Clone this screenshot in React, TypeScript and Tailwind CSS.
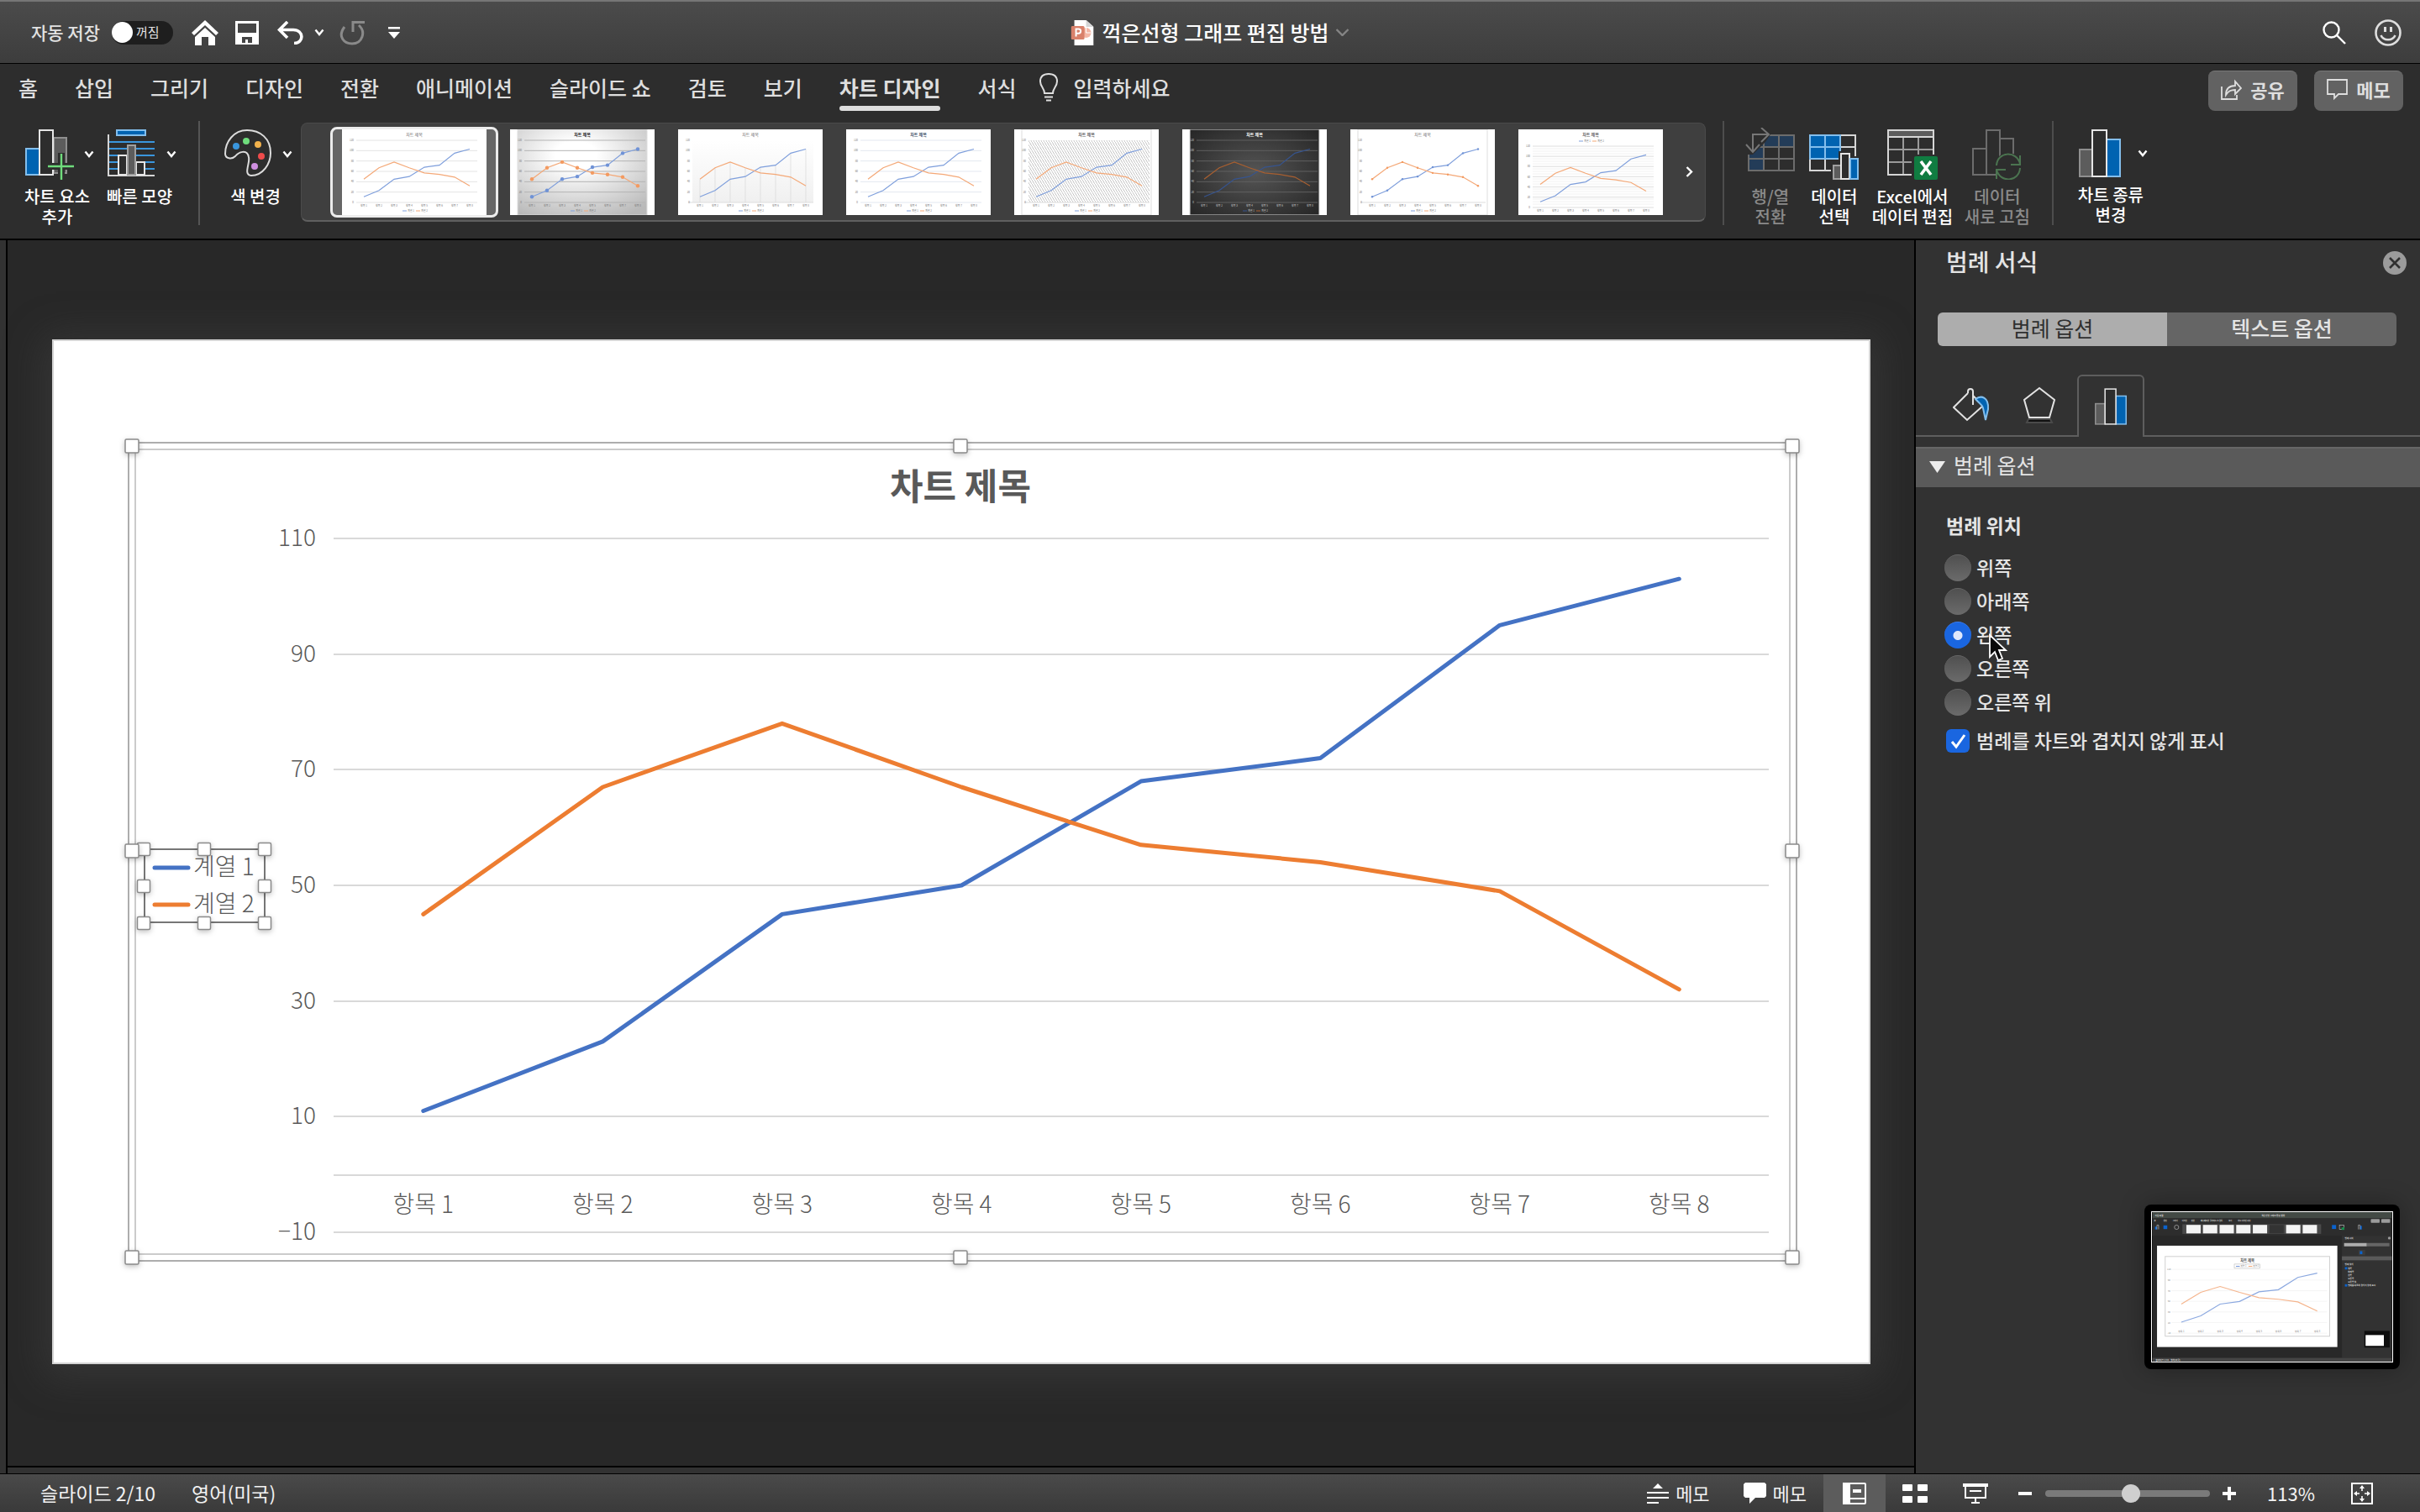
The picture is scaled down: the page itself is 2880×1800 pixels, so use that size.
import type { ReactNode } from "react";

const seriesOne = [11, 23, 45, 50, 68, 72, 95, 103];
const seriesTwo = [45, 67, 78, 67, 57, 54, 49, 32];

const tabs = [
  "홈",
  "삽입",
  "그리기",
  "디자인",
  "전환",
  "애니메이션",
  "슬라이드 쇼",
  "검토",
  "보기",
  "차트 디자인",
  "서식",
];

const legendPositions = ["위쪽", "아래쪽", "왼쪽", "오른쪽", "오른쪽 위"];

type Point = [number, number];

function plot(
  values: number[],
  left: number,
  right: number,
  top: number,
  bottom: number,
  min: number,
  max: number,
): Point[] {
  const step = (right - left) / values.length;
  return values.map((v, i) => [
    left + step * (i + 0.5),
    bottom - ((v - min) / (max - min)) * (bottom - top),
  ]);
}

function toPoints(points: Point[]) {
  return points.map(([x, y]) => `${x.toFixed(1)},${y.toFixed(1)}`).join(" ");
}

/* ---------- icons ---------- */

function Chevron({ className = "" }: { className?: string }) {
  return (
    <svg width="12" height="9" viewBox="0 0 12 9" className={className}>
      <path d="M1.5 1.5 6 7l4.5-5.5" fill="none" stroke="currentColor" strokeWidth="2.4" />
    </svg>
  );
}

function AddElementIcon() {
  return (
    <svg width="58" height="62" viewBox="0 0 58 62" fill="none" strokeWidth="2">
      <rect x="1" y="25" width="16" height="31" fill="#0063b1" stroke="#83beec" />
      <path d="M34 12h15v42H34z" fill="#5c5c5c" stroke="#8f8f8f" />
      <rect x="17" y="3" width="16" height="53" fill="#2d2d2d" stroke="#e6e6e6" />
      <path d="M43 30v31M27 46h31" stroke="#2d2d2d" strokeWidth="8" />
      <path d="M43 31v31M27 46h31" stroke="#6fdc7c" strokeWidth="2.4" />
    </svg>
  );
}

function QuickLayoutIcon() {
  return (
    <svg width="58" height="62" viewBox="0 0 58 62" fill="none" strokeWidth="2">
      <rect x="11" y="3" width="34" height="6" fill="#0063b1" stroke="#83beec" />
      <path d="M2 17h54M2 25h54M2 33h54M2 41h54M2 49h54" stroke="#3a96dd" />
      <path d="M1 8v49h55" stroke="#d6d6d6" />
      <rect x="13" y="33" width="10" height="23" fill="#2d2d2d" stroke="#e6e6e6" />
      <rect x="34" y="41" width="10" height="15" fill="#2d2d2d" stroke="#e6e6e6" />
      <rect x="24" y="21" width="9" height="35" fill="#5c5c5c" stroke="#a0a0a0" />
    </svg>
  );
}

function PaletteIcon() {
  return (
    <svg width="58" height="62" viewBox="0 0 58 62" fill="none">
      <path
        d="M28 3C12 3 2 17 2 31c0 6 8 7 12 3 4-5 14-9 16 1 2 7-7 21 3 22C47 57 56 43 56 30 56 13 44 3 28 3Z"
        stroke="#dcdcdc"
        strokeWidth="2"
      />
      <circle cx="15" cy="22" r="4" fill="#3a96dd" />
      <circle cx="27" cy="16" r="4" fill="#6fdc7c" />
      <circle cx="41" cy="20" r="4" fill="#f2b14c" />
      <circle cx="45" cy="34" r="4" fill="#ee4b4b" />
      <circle cx="37" cy="46" r="4" fill="#cf8fe0" />
    </svg>
  );
}

function SwapRowsIcon() {
  return (
    <svg width="60" height="62" viewBox="0 0 60 62" fill="none" strokeWidth="2">
      <path d="M4 9h54v14H22v28H4z" fill="#233c58" />
      <path d="M4 9h54v42H4zM22 9v42M40 9v42M4 23h54M4 37h54" stroke="#6c6c6c" />
      <path d="M0 0h24l6 8-6 9L9 32H0z" fill="#2d2d2d" />
      <path d="M9 28V8h18M19 0l9 8-9 9M1 20l8 9 8-9" stroke="#777777" />
    </svg>
  );
}

function SelectDataIcon() {
  return (
    <svg width="60" height="62" viewBox="0 0 60 62" fill="none" strokeWidth="2">
      <path d="M1 9h54v42H1zM19 9v42M37 9v42M1 23h54M1 37h54" stroke="#d6d6d6" />
      <path d="M1 9h36v28H1z" fill="#0063b1" stroke="#83beec" />
      <path d="M19 9v28M1 23h36" stroke="#83beec" />
      <path d="M26 42h9V28h14v6h11v28H26z" fill="#2d2d2d" />
      <rect x="29" y="45" width="9" height="16" fill="#5c5c5c" stroke="#a0a0a0" />
      <rect x="38" y="31" width="10" height="30" fill="#2d2d2d" stroke="#e6e6e6" />
      <rect x="49" y="37" width="9" height="24" fill="#0063b1" stroke="#83beec" />
    </svg>
  );
}

function ExcelIcon() {
  return (
    <svg width="60" height="62" viewBox="0 0 60 62" fill="none" strokeWidth="2">
      <path d="M19 11v45M37 11v45M1 26h54M1 41h54" stroke="#9a9a9a" />
      <rect x="1" y="3" width="54" height="53" stroke="#d6d6d6" />
      <rect x="1" y="3" width="54" height="8" fill="#5c5c5c" stroke="#d6d6d6" />
      <rect x="29" y="32" width="31" height="30" fill="#2d2d2d" />
      <rect x="32" y="34" width="28" height="28" rx="2" fill="#107c41" />
      <path d="m40 40 12 16M52 40 40 56" stroke="#ffffff" strokeWidth="3.6" />
    </svg>
  );
}

function RefreshDataIcon() {
  return (
    <svg width="60" height="62" viewBox="0 0 60 62" fill="none" strokeWidth="2">
      <rect x="1" y="25" width="16" height="31" stroke="#6c6c6c" />
      <rect x="33" y="13" width="16" height="43" stroke="#6c6c6c" />
      <rect x="17" y="3" width="16" height="53" fill="#2d2d2d" stroke="#6c6c6c" />
      <circle cx="43" cy="47" r="17" fill="#2d2d2d" />
      <path d="M29 45c1-17 24-18 28-2M57 33v11H46M57 48c-1 17-24 18-28 2M29 61V50h11" stroke="#4b7450" />
    </svg>
  );
}

function BarsIcon({ width, height }: { width: number; height: number }) {
  return (
    <svg width={width} height={height} viewBox="0 0 50 57" fill="none" strokeWidth="2">
      <rect x="1" y="24" width="15" height="32" fill="#5c5c5c" stroke="#8f8f8f" />
      <rect x="33" y="12" width="16" height="44" fill="#0063b1" stroke="#83beec" />
      <rect x="16" y="1" width="17" height="55" fill="#2d2d2d" stroke="#e6e6e6" />
    </svg>
  );
}

/* ---------- gallery ---------- */

type ThumbStyle = {
  name: string;
  background?: string;
  title?: string;
  bold?: boolean;
  text?: string;
  grid?: string;
  inset?: boolean;
  markers?: boolean;
  drops?: boolean;
  hatch?: boolean;
  fine?: boolean;
  legendTop?: boolean;
  dim?: boolean;
};

const thumbs: ThumbStyle[] = [
  { name: "스타일 1", grid: "#e4e4e4" },
  { name: "스타일 2", background: "url(#silver)", title: "#222222", bold: true, grid: "#b4b4b4", inset: true, markers: true },
  { name: "스타일 3", drops: true },
  { name: "스타일 4", title: "#44546a", bold: true, grid: "#e3e8f0" },
  { name: "스타일 5", hatch: true, inset: true, bold: true },
  { name: "스타일 6", background: "url(#night)", title: "#ffffff", text: "#c8c8c8", bold: true, grid: "#606060", inset: true, dim: true },
  { name: "스타일 7", inset: true, markers: true },
  { name: "스타일 8", grid: "#dddddd", fine: true, legendTop: true, bold: true },
];

function ChartThumb({ style }: { style: ThumbStyle }) {
  const left = 17;
  const right = 161;
  const top = style.legendTop ? 20 : 13;
  const bottom = style.legendTop ? 93 : 87;
  const one = plot(seriesOne, left, right, top, bottom, 0, 120);
  const two = plot(seriesTwo, left, right, top, bottom, 0, 120);
  const blue = style.dim ? "#36548f" : "#7f9fdc";
  const orange = style.dim ? "#a85f30" : "#f4a877";
  const text = style.text ?? "#777777";
  const rows = [0, 1, 2, 3, 4, 5, 6].map((i) => top + ((bottom - top) / 6) * i);
  const legendY = style.legendTop ? 15 : 98;
  const markerSize = style.background ? 2.2 : 1.2;

  return (
    <svg width="172" height="102" viewBox="0 0 172 102" className="bg-white">
      <defs>
        <radialGradient id="silver" cx="0.45" cy="0.3" r="0.8">
          <stop offset="0.2" stopColor="#ffffff" />
          <stop offset="1" stopColor="#b9b9b9" />
        </radialGradient>
        <radialGradient id="night" cx="0.5" cy="0.5" r="0.7">
          <stop offset="0" stopColor="#555555" />
          <stop offset="1" stopColor="#262626" />
        </radialGradient>
        <linearGradient id="fade" x1="0" y1="0" x2="0" y2="1">
          <stop offset="0" stopColor="#ffffff" />
          <stop offset="1" stopColor="#f0f0f0" />
        </linearGradient>
        <pattern id="hatch" width="3" height="5" patternUnits="userSpaceOnUse">
          <path d="M0 0 3 5" stroke="#b4b4b4" strokeWidth="0.8" />
        </pattern>
      </defs>
      {style.inset && (
        <rect x="9" y="0" width="154" height="102" fill={style.background ?? "#ffffff"} stroke="#dddddd" strokeWidth="1" />
      )}
      {style.drops && <rect x={left} y={top} width={right - left} height={bottom - top} fill="url(#fade)" />}
      {style.hatch && <rect x={left} y={top} width={right - left} height={bottom - top} fill="url(#hatch)" />}
      {style.grid &&
        rows.map((y) => <path key={y} d={`M${left} ${y}H${right}`} stroke={style.grid} strokeWidth="1" />)}
      {style.fine &&
        Array.from({ length: 24 }, (_, i) => (
          <path key={i} d={`M${left} ${top + i * 3}H${right}`} stroke="#efefef" strokeWidth="0.8" />
        ))}
      {!style.grid && <path d={`M${left - 5} ${bottom}H${right}`} stroke="#dddddd" strokeWidth="1" />}
      {style.drops &&
        one.map(([x, y], i) => (
          <path key={x} d={`M${x} ${Math.min(y, two[i][1])}V${bottom}`} stroke="#d9d9d9" strokeWidth="0.7" />
        ))}
      <polyline points={toPoints(one)} fill="none" stroke={blue} strokeWidth="1.2" />
      <polyline points={toPoints(two)} fill="none" stroke={orange} strokeWidth="1.2" />
      {style.markers && one.map(([x, y]) => <circle key={x} cx={x} cy={y} r={markerSize} fill="#6f92d6" />)}
      {style.markers && two.map(([x, y]) => <circle key={x} cx={x} cy={y} r={markerSize} fill="#f39a60" />)}
      <text
        x="86"
        y="8"
        textAnchor="middle"
        fontSize="5"
        fontWeight={style.bold ? 700 : 400}
        fill={style.title ?? "#666666"}
      >
        차트 제목
      </text>
      {rows.map((y, i) => (
        <text key={y} x={left - 3} y={y + 1} textAnchor="end" fontSize="3" fill={text}>
          {120 - i * 20}
        </text>
      ))}
      {one.map(([x], i) => (
        <text key={x} x={x} y={bottom + 5} textAnchor="middle" fontSize="3" fill={text}>
          항목 {i + 1}
        </text>
      ))}
      <path d={`M72 ${legendY - 1}h5`} stroke={blue} strokeWidth="1" />
      <text x="78" y={legendY} fontSize="3" fill={text}>
        계열 1
      </text>
      <path d={`M88 ${legendY - 1}h5`} stroke={orange} strokeWidth="1" />
      <text x="94" y={legendY} fontSize="3" fill={text}>
        계열 2
      </text>
    </svg>
  );
}

/* ---------- slide ---------- */

function Handle({ x, y, size = 16 }: { x: number; y: number; size?: number }) {
  return (
    <rect
      x={x - size / 2}
      y={y - size / 2}
      width={size}
      height={size}
      rx="1.5"
      fill="#ffffff"
      stroke="#8a8a8a"
      strokeWidth="1.5"
      className="drop-shadow-[0_2px_3px_rgba(0,0,0,0.25)]"
    />
  );
}

function SlideChart() {
  const left = 335;
  const right = 2043;
  const top = 237;
  const bottom = 1063;
  const one = plot(seriesOne, left, right, top, bottom, -10, 110);
  const two = plot(seriesTwo, left, right, top, bottom, -10, 110);
  const ticks = [110, 90, 70, 50, 30, 10, -10];

  return (
    <svg
      viewBox="0 0 2164 1220"
      className="block w-full bg-white shadow-[0_6px_44px_10px_rgba(70,70,70,0.45)]"
      fontSize="28"
      fontWeight="300"
      fill="#595959"
    >
      <rect x="1" y="1" width="2162" height="1218" fill="#ffffff" stroke="#d4d4d4" strokeWidth="2" />
      <rect x="91" y="123" width="1985" height="974" fill="none" stroke="#adadad" strokeWidth="2" />
      <rect x="99" y="131" width="1969" height="958" fill="none" stroke="#cbcbcb" strokeWidth="2" />

      <text x="1081" y="191" textAnchor="middle" fontSize="43" fontWeight="700">
        차트 제목
      </text>

      {ticks.map((tick, i) => {
        const y = Math.round(top + ((bottom - top) / 6) * i);
        return (
          <g key={tick}>
            <path d={`M${left} ${y}H${right}`} stroke="#d9d9d9" strokeWidth="2" />
            <text x="314" y={y + 9} textAnchor="end">
              {tick < 0 ? `−${-tick}` : tick}
            </text>
          </g>
        );
      })}
      <path d={`M${left} 995H${right}`} stroke="#d9d9d9" strokeWidth="2" />
      {one.map(([x], i) => (
        <text key={x} x={x} y="1040" textAnchor="middle">
          항목 {i + 1}
        </text>
      ))}

      <g fill="none" strokeWidth="5" strokeLinecap="round" strokeLinejoin="round">
        <polyline points={toPoints(one)} stroke="#4472c4" />
        <polyline points={toPoints(two)} stroke="#ed7d31" />
        <path d="M122 629h40" stroke="#4472c4" />
        <path d="M122 673h40" stroke="#ed7d31" />
      </g>

      {/* selected legend */}
      <text x="168" y="638">
        계열 1
      </text>
      <text x="168" y="682">
        계열 2
      </text>
      <rect x="110" y="607" width="143" height="87" fill="none" stroke="#767676" strokeWidth="2" />
      {[607, 651, 695].map((y) =>
        [109, 181, 253].map((x) =>
          x === 181 && y === 651 ? null : <Handle key={`${x}-${y}`} x={x} y={y} size={15} />,
        ),
      )}

      {[127, 609, 1093].map((y) =>
        [95, 1081, 2071].map((x) =>
          x === 1081 && y === 609 ? null : <Handle key={`${x}-${y}`} x={x} y={y} />,
        ),
      )}
    </svg>
  );
}

/* ---------- floating preview of the window ---------- */

function WindowPreview() {
  const one = plot(seriesOne, 230, 2100, 690, 1460, -10, 110);
  const two = plot(seriesTwo, 230, 2100, 690, 1460, -10, 110);

  return (
    <svg width="288" height="180" viewBox="0 0 2880 1800" className="block border border-white">
      <rect width="2880" height="1800" fill="#282828" />
      <rect width="2880" height="75" fill="#434a45" />
      <rect y="75" width="2880" height="210" fill="#2d2d2d" />
      <rect x="2280" y="285" width="600" height="1470" fill="#323232" />
      <rect y="1755" width="2880" height="45" fill="#444444" />
      <g fill="#d8d8d8" fontSize="26" fontWeight="700">
        <text x="30" y="48">자동 저장</text>
        <text x="1313" y="48">꺽은선형 그래프 편집 방법</text>
        {tabs.map((tab, i) => (
          <text key={tab} x={20 + i * 112} y="116" fontSize="22">
            {tab}
          </text>
        ))}
        <text x="2316" y="322">범례 서식</text>
        <text x="2316" y="636">범례 위치</text>
        {legendPositions.map((label, i) => (
          <text key={label} x="2352" y={686 + i * 40}>
            {label}
          </text>
        ))}
        <text x="2352" y="892">범례를 차트와 겹치지 않게 표시</text>
        <text x="40" y="1788">슬라이드 2/10</text>
        <text x="220" y="1788">영어(미국)</text>
      </g>
      <g fill="#9b9b9b">
        <circle cx="2850" cy="313" r="16" />
        <rect x="2628" y="84" width="106" height="46" rx="8" />
        <rect x="2754" y="84" width="106" height="46" rx="8" />
        <rect x="2306" y="372" width="274" height="40" fill="#adadad" />
        <rect x="2580" y="372" width="272" height="40" fill="#666666" />
        <rect x="2280" y="532" width="600" height="48" fill="#5a5a5a" />
        <rect x="2480" y="455" width="80" height="64" fill="#3d3d3d" />
      </g>
      <g fill="#0b63ce">
        <rect x="2316" y="662" width="28" height="28" />
        <rect x="2316" y="868" width="28" height="28" />
        <rect x="2496" y="470" width="30" height="36" />
        <rect x="30" y="175" width="24" height="34" />
        <rect x="132" y="160" width="46" height="44" />
        <rect x="2160" y="155" width="50" height="48" />
        <rect x="2500" y="165" width="20" height="44" />
      </g>
      <g fill="none" stroke="#cccccc" strokeWidth="6">
        <path d="M54 208v-52h20v52M2498 208v-52h-20v52" />
        <rect x="2250" y="155" width="56" height="52" />
        <circle cx="290" cy="182" r="26" />
      </g>
      <rect x="2276" y="184" width="34" height="30" fill="#17904b" />
      <rect x="360" y="146" width="1670" height="116" fill="#4a4a4a" />
      {thumbs.map((thumb, i) => (
        <rect key={thumb.name} x={408 + i * 200} y="154" width="172" height="102" fill={thumb.dim ? "#333333" : "#f4f4f4"} />
      ))}
      <rect x="55" y="404" width="2170" height="1220" fill="#ffffff" />
      <rect x="153" y="534" width="1980" height="960" fill="none" stroke="#d0d0d0" strokeWidth="10" />
      <g fill="#888888" fontSize="28" textAnchor="middle">
        <text x="1143" y="592" fontSize="44" fontWeight="700" fill="#555555">
          차트 제목
        </text>
        {[110, 90, 70, 50, 30, 10, -10].map((tick, i) => (
          <g key={tick}>
            <text x="200" y={700 + i * 128}>
              {tick}
            </text>
            <path d={`M230 ${690 + i * 128}H2100`} stroke="#ebebeb" strokeWidth="5" />
          </g>
        ))}
        {one.map(([x], i) => (
          <text key={x} x={x} y="1442">
            항목 {i + 1}
          </text>
        ))}
        <text x="1095" y="662">계열 1</text>
        <text x="1245" y="662">계열 2</text>
      </g>
      <rect x="985" y="626" width="310" height="50" fill="none" stroke="#aaaaaa" strokeWidth="5" />
      <path d="M1005 652h46" stroke="#6f93d8" strokeWidth="10" />
      <path d="M1155 652h46" stroke="#f2a472" strokeWidth="10" />
      <polyline points={toPoints(one)} fill="none" stroke="#8ba8e0" strokeWidth="12" />
      <polyline points={toPoints(two)} fill="none" stroke="#f5b48c" strokeWidth="12" />
      <rect x="2550" y="1430" width="305" height="200" fill="#0d0d0d" />
      <rect x="2565" y="1480" width="220" height="130" fill="#ffffff" />
    </svg>
  );
}

/* ---------- ribbon ---------- */

type RibbonButtonProps = {
  icon: ReactNode;
  lines: string[];
  className?: string;
  menu?: boolean;
  disabled?: boolean;
};

function RibbonButton({ icon, lines, className = "w-[92px]", menu, disabled }: RibbonButtonProps) {
  return (
    <button
      type="button"
      disabled={disabled}
      className={`flex shrink-0 flex-col pt-2 ${disabled ? "text-[#8a8a8a]" : "text-white"} ${className}`}
    >
      <span className={`flex h-[62px] w-full items-center ${menu ? "gap-3 pl-2" : "justify-center"}`}>
        {icon}
        {menu && <Chevron />}
      </span>
      <span className="mt-2 w-full text-center text-[20px] leading-6 font-medium whitespace-nowrap">
        {lines.map((line) => (
          <span key={line} className="block">
            {line}
          </span>
        ))}
      </span>
    </button>
  );
}

function TitleBar() {
  return (
    <header className="relative flex h-[76px] items-center border-t-2 border-b border-t-[#767676] border-b-black bg-linear-to-b from-[#4b4b4b] to-[#3d3d3d] pr-[22px] pl-[37px] text-white">
      <span className="text-[21px] font-medium text-[#e2e2e2]">자동 저장</span>
      <button
        type="button"
        role="switch"
        aria-checked="false"
        aria-label="자동 저장"
        className="ml-3.5 flex h-7 w-[73px] items-center rounded-full bg-[#1e1e1e] text-[15px] text-[#e2e2e2]"
      >
        <span className="mr-1 size-[25px] rounded-full bg-white" />
        꺼짐
      </button>

      <button type="button" aria-label="홈" className="ml-[22px]">
        <svg width="32" height="30" viewBox="0 0 32 30" fill="#ffffff">
          <path d="M16 0 0 15l3 3L16 6l13 12 3-3z" />
          <path d="M16 9 4 20v10h8V20h8v10h8V20z" />
        </svg>
      </button>
      <button type="button" aria-label="저장" className="ml-5">
        <svg width="28" height="28" viewBox="0 0 28 28" fill="none" stroke="#ffffff">
          <path d="M1.5 1.5h25v25h-25z" strokeWidth="3" />
          <path d="M2 14h24v13H2z" fill="#ffffff" stroke="none" />
          <path d="M8 19h12v7h-5v-4h-3v4H8z" fill="#444444" stroke="none" />
        </svg>
      </button>
      <button type="button" aria-label="실행 취소" className="ml-[22px]">
        <svg width="32" height="28" viewBox="0 0 32 28" fill="none" stroke="#ffffff" strokeWidth="3.6">
          <path d="M12 1 2.5 10.5 12 20M3 10.5h16c13 0 13 16 1 16" />
        </svg>
      </button>
      <Chevron className="ml-3" />
      <button type="button" aria-label="다시 실행" disabled className="ml-[18px]">
        <svg width="31" height="30" viewBox="0 0 31 30" fill="none" stroke="#8a8a8a" strokeWidth="3">
          <path d="M6 8c-9 12 0 20 9 20 12 0 17-14 8-22M16 14V2.5h14" />
        </svg>
      </button>
      <button type="button" aria-label="빠른 실행 사용자 지정" className="ml-[27px]">
        <svg width="14" height="14" viewBox="0 0 14 14" fill="#ffffff">
          <path d="M0 0h14v2.5H0zM0 6h14l-7 8z" />
        </svg>
      </button>

      <h1 className="absolute left-1/2 flex -translate-x-1/2 items-center text-[25px] font-medium whitespace-nowrap">
        <svg width="27" height="30" viewBox="0 0 27 30" className="mr-2.5">
          <path d="M4 0h14l9 8v22H4z" fill="#ffffff" />
          <path d="M18 0v8h9z" fill="#d5d5d5" />
          <circle cx="18" cy="15" r="6" fill="#f3b7a6" />
          <path d="M18 9v6h6" stroke="#ffffff" fill="none" />
          <rect y="7" width="16" height="16" rx="1.5" fill="#d9816b" />
          <path d="M6 19.5V10.5h3a2.6 2.6 0 0 1 0 5.2H6" fill="none" stroke="#ffffff" strokeWidth="2" />
        </svg>
        꺽은선형 그래프 편집 방법
        <svg width="16" height="9" viewBox="0 0 16 9" className="ml-2">
          <path d="m1 1 7 7 7-7" fill="none" stroke="#858585" strokeWidth="2.4" />
        </svg>
      </h1>

      <button type="button" aria-label="검색" className="ml-auto">
        <svg width="28" height="28" viewBox="0 0 28 28" fill="none" stroke="#ffffff" strokeWidth="2.4">
          <circle cx="10.5" cy="10.5" r="9" />
          <path d="m17 17 10 10" />
        </svg>
      </button>
      <button type="button" aria-label="피드백" className="ml-[34px]">
        <svg width="32" height="32" viewBox="0 0 32 32" fill="none" stroke="#dedede" strokeWidth="2.6">
          <circle cx="16" cy="16" r="14.5" />
          <path d="M12.5 9v6M19.5 9v6" strokeWidth="3" />
          <path d="M7.5 19c3 7 14 7 17 0" />
        </svg>
      </button>
    </header>
  );
}

function TabRow() {
  return (
    <div className="flex h-[68px] items-start pr-5 pl-[22px] text-[25px] text-[#dedede]">
      <nav className="flex items-start gap-11">
        {tabs.map((tab) => {
          const active = tab === "차트 디자인";
          return (
            <button
              key={tab}
              type="button"
              className={`shrink-0 pt-2.5 leading-9 whitespace-nowrap ${active ? "font-bold" : "font-medium"}`}
            >
              {tab}
              {active && <span className="mt-1 block h-1.5 rounded-full bg-[#dedede]" />}
            </button>
          );
        })}
      </nav>
      <button type="button" className="ml-7 flex items-center gap-[18px] pt-2.5 leading-9 font-medium whitespace-nowrap">
        <svg width="22" height="34" viewBox="0 0 22 34" fill="none" stroke="#dedede" strokeWidth="2">
          <path d="M6 24c0-6-5-8-5-14C1 4 5 1 11 1s10 3 10 9c0 6-5 8-5 14zM6 28.5h10" />
          <path d="M8 32.5h6" />
        </svg>
        입력하세요
      </button>

      <div className="ml-auto flex gap-5 pt-2 text-[22px] font-bold">
        <button
          type="button"
          className="flex h-12 w-[106px] items-center justify-center gap-2.5 rounded-lg border-t border-[#777777] bg-[#626262] pb-1"
        >
          <svg width="25" height="25" viewBox="0 0 25 25" fill="none" stroke="#dedede" strokeWidth="1.8">
            <path d="M1 9v15h18v-5" />
            <path d="M6 19c0-8 5-11 11-11V3l7 8-7 7v-5c-5 0-8 1-11 6Z" />
          </svg>
          공유
        </button>
        <button
          type="button"
          className="flex h-12 w-[106px] items-center justify-center gap-2.5 rounded-lg border-t border-[#777777] bg-[#626262] pb-1"
        >
          <svg width="25" height="25" viewBox="0 0 25 25" fill="none" stroke="#dedede" strokeWidth="1.8">
            <path d="M1 1h23v17H14l-5 5v-5H1z" />
          </svg>
          메모
        </button>
      </div>
    </div>
  );
}

function Ribbon() {
  return (
    <div className="border-b-2 border-black bg-[#2d2d2d] pb-4">
      <TabRow />
      <div className="flex h-[124px] pl-[22px]">
        <RibbonButton icon={<AddElementIcon />} lines={["차트 요소", "추가"]} menu />
        <RibbonButton icon={<QuickLayoutIcon />} lines={["빠른 모양"]} menu className="ml-1.5 w-[92px]" />
        <div className="mr-5 ml-6 w-0.5 shrink-0 bg-[#555555]" />
        <RibbonButton icon={<PaletteIcon />} lines={["색 변경"]} menu />

        <div className="mt-0.5 ml-2 flex h-[118px] w-[58.5%] shrink-0 items-center rounded-lg border border-b-2 border-[#4a4a4a] border-b-[#606060] bg-[#3f3f3f] pl-[34px]">
          {thumbs.map((thumb, i) => (
            <button
              key={thumb.name}
              type="button"
              aria-label={thumb.name}
              className={`flex h-[108px] w-[200px] shrink-0 items-center justify-center ${
                i === 0 ? "rounded-lg border-[3px] border-[#ececec] bg-[#666666]" : ""
              }`}
            >
              <ChartThumb style={thumb} />
            </button>
          ))}
          <button type="button" aria-label="다음 스타일" className="flex flex-1 justify-center">
            <svg width="9" height="13" viewBox="0 0 9 13">
              <path d="m1.5 1 5.5 5.5L1.5 12" fill="none" stroke="#ffffff" strokeWidth="2.4" />
            </svg>
          </button>
        </div>

        <div className="mr-4 ml-5 w-0.5 shrink-0 bg-[#4d4d4d]" />
        <RibbonButton icon={<SwapRowsIcon />} lines={["행/열", "전환"]} className="w-[78px]" disabled />
        <RibbonButton icon={<SelectDataIcon />} lines={["데이터", "선택"]} className="w-[74px]" />
        <RibbonButton icon={<ExcelIcon />} lines={["Excel에서", "데이터 편집"]} className="w-[112px]" />
        <RibbonButton icon={<RefreshDataIcon />} lines={["데이터", "새로 고침"]} className="w-[90px]" disabled />
        <div className="mr-[22px] ml-5 w-0.5 shrink-0 bg-[#4d4d4d]" />
        <RibbonButton
          icon={
            <span className="w-[58px]">
              <BarsIcon width={50} height={57} />
            </span>
          }
          lines={["차트 종류", "변경"]}
          menu
        />
      </div>
    </div>
  );
}

/* ---------- format pane ---------- */

function FormatPane() {
  return (
    <aside className="w-[602px] shrink-0 border-l-2 border-black bg-[#323232] text-[23px] text-[#e4e4e4]">
      <div className="flex h-[54px] items-center justify-between pr-4 pl-9">
        <h2 className="pb-1 text-[28px] font-medium">범례 서식</h2>
        <button
          type="button"
          aria-label="닫기"
          className="flex size-7 items-center justify-center rounded-full bg-[#9b9b9b]"
        >
          <svg width="14" height="14" viewBox="0 0 14 14" stroke="#303030" strokeWidth="2.6">
            <path d="m1 1 12 12M13 1 1 13" />
          </svg>
        </button>
      </div>

      <div className="mt-8 mr-7 ml-[26px] grid h-10 grid-cols-2 overflow-hidden rounded-md text-[25px] leading-9">
        <button type="button" className="bg-[#adadad] pb-1 text-[#303030]">
          범례 옵션
        </button>
        <button type="button" className="bg-[#656565] pb-1 font-medium">
          텍스트 옵션
        </button>
      </div>

      <div className="mt-[34px] flex h-[74px] items-end">
        <div className="h-full w-[192px] border-b-2 border-[#5e5e5e] pl-11">
          <div className="flex h-full items-center gap-10">
            <button type="button" aria-label="채우기 및 선">
              <svg width="44" height="40" viewBox="0 0 44 40" fill="none" strokeWidth="2">
                <path d="M18 6 1 23l16 15 19-17" stroke="#e2e2e2" />
                <path d="M24 20V4c0-4-6-4-6 0v2M24 9l4 4" stroke="#e2e2e2" />
                <path d="M27 13c7-5 16-2 15 12l-3 13-3-14c-1-5-4-5-9-11Z" fill="#0063b1" stroke="#83beec" />
              </svg>
            </button>
            <button type="button" aria-label="효과">
              <svg width="38" height="44" viewBox="0 0 38 44" fill="none" strokeWidth="2">
                <path d="M6 39h26l2 4H4z" fill="#111111" stroke="#4a4a4a" />
                <path d="M19 2 1 16l6 21h24l6-21z" fill="#323232" stroke="#e2e2e2" />
              </svg>
            </button>
          </div>
        </div>
        <button
          type="button"
          aria-label="범례 옵션"
          className="flex h-full w-20 items-center justify-center rounded-t-md border-2 border-b-0 border-[#5e5e5e]"
        >
          <BarsIcon width={38} height={44} />
        </button>
        <div className="h-full flex-1 border-b-2 border-[#5e5e5e]" />
      </div>

      <h3>
        <button
          type="button"
          className="mt-3 flex h-12 w-full items-center gap-2.5 border-t-2 border-[#666666] bg-[#5a5a5a] pb-0.5 pl-4 text-[25px]"
        >
          <svg width="19" height="14" viewBox="0 0 19 14" fill="#ececec">
            <path d="M0 0h19L9.5 14z" />
          </svg>
          <span className="pb-1">범례 옵션</span>
        </button>
      </h3>

      <fieldset className="pt-7 pl-[34px]">
        <legend className="float-left mb-3.5 w-full pl-0.5 leading-[34px] font-bold">범례 위치</legend>
        <div className="clear-both">
          {legendPositions.map((label) => (
            <label key={label} className="relative flex h-10 w-fit items-center gap-1.5 font-medium">
              <input
                type="radio"
                name="legend-position"
                defaultChecked={label === "왼쪽"}
                className="size-8 appearance-none rounded-full border-t border-[#686868] bg-linear-to-b from-[#505050] to-[#6b6b6b] checked:border-[#3a7df0] checked:bg-[radial-gradient(circle,#dfe8fb_5px,#1a66e0_6px)]"
              />
              <span className="pb-0.5">{label}</span>
              {label === "왼쪽" && (
                <svg width="26" height="36" viewBox="0 0 26 36" className="absolute top-[18px] left-[52px] z-10">
                  <path d="M2 2v26l6-6 4 10 5-2-4-10h8z" fill="#0a0a0a" stroke="#ffffff" strokeWidth="1.8" />
                </svg>
              )}
            </label>
          ))}
        </div>
        <label className="mt-1.5 flex h-10 w-fit items-center gap-2 pl-0.5 font-medium">
          <span className="relative flex size-7">
            <input type="checkbox" defaultChecked className="size-7 appearance-none rounded-md bg-[#1a66e0]" />
            <svg width="28" height="28" viewBox="0 0 28 28" className="pointer-events-none absolute inset-0">
              <path d="m7 15 5 6 10-14" fill="none" stroke="#ffffff" strokeWidth="3" />
            </svg>
          </span>
          <span className="pb-0.5">범례를 차트와 겹치지 않게 표시</span>
        </label>
      </fieldset>
    </aside>
  );
}

/* ---------- status bar ---------- */

function StatusBar() {
  return (
    <footer className="flex h-[46px] items-center border-t border-black bg-linear-to-b from-[#4a4a4a] to-[#3a3a3a] pr-14 pl-12 text-[23px] text-[#f2f2f2]">
      <span>슬라이드 2/10</span>
      <button type="button" className="ml-[43px]">
        영어(미국)
      </button>

      <div className="ml-auto flex h-full items-center text-[22px]">
        <button type="button" className="flex items-center gap-2">
          <svg width="26" height="24" viewBox="0 0 26 24" fill="#ffffff">
            <path d="m13 0 6 6H7zM0 10h26v2H0zM0 16h26v2H0zM0 22h14v2H0z" />
          </svg>
          메모
        </button>
        <button type="button" className="ml-10 flex items-center gap-2">
          <svg width="27" height="25" viewBox="0 0 27 25" fill="#ffffff">
            <path d="M2 0h23l2 2v14l-2 2H14l-7 7v-7H2l-2-2V2z" />
          </svg>
          메모
        </button>
        <button
          type="button"
          aria-label="기본 보기"
          className="ml-5 flex h-full w-[74px] items-center justify-center bg-[#5c5c5c]"
        >
          <svg width="28" height="26" viewBox="0 0 28 26" fill="none" stroke="#ffffff" strokeWidth="2">
            <rect x="1" y="1" width="26" height="24" rx="1" />
            <path d="M1 1h7v24H1z" fill="#ffffff" />
            <path d="M8 19h19" />
            <path d="M12 8h10v4H12z" fill="#ffffff" stroke="none" />
          </svg>
        </button>
        <button type="button" aria-label="여러 슬라이드" className="flex w-[70px] justify-center">
          <svg width="30" height="22" viewBox="0 0 30 22" fill="#ffffff">
            <rect width="12" height="8" rx="1" />
            <rect x="18" width="12" height="8" rx="1" />
            <rect y="14" width="12" height="8" rx="1" />
            <rect x="18" y="14" width="12" height="8" rx="1" />
          </svg>
        </button>
        <button type="button" aria-label="슬라이드 쇼" className="flex w-[74px] justify-center">
          <svg width="30" height="24" viewBox="0 0 30 24" fill="none" stroke="#ffffff" strokeWidth="2">
            <path d="M0 2h30" strokeWidth="4" />
            <path d="M3 3v14h24V3M8 9h14M15 17v5M10 23h10" />
          </svg>
        </button>
        <button type="button" aria-label="축소" className="flex w-11 justify-center">
          <span className="h-1 w-4 bg-white" />
        </button>
        <input
          type="range"
          aria-label="확대/축소"
          defaultValue={52}
          className="ml-0.5 h-2 w-[196px] appearance-none rounded-full bg-[#7a7a7a] [&::-webkit-slider-thumb]:size-[22px] [&::-webkit-slider-thumb]:appearance-none [&::-webkit-slider-thumb]:rounded-full [&::-webkit-slider-thumb]:bg-[#cfcfcf]"
        />
        <button type="button" aria-label="확대" className="flex w-[46px] justify-center">
          <svg width="16" height="16" viewBox="0 0 16 16" fill="#ffffff">
            <path d="M6 0h4v6h6v4h-6v6H6v-6H0V6h6z" />
          </svg>
        </button>
        <button type="button" className="ml-[22px]">
          113%
        </button>
        <button type="button" aria-label="창에 맞춤" className="ml-[43px]">
          <svg width="26" height="26" viewBox="0 0 26 26" fill="none" stroke="#ffffff" strokeWidth="2">
            <rect x="1" y="1" width="24" height="24" />
            <path d="M13 4v6M13 16v6M4 13h6M16 13h6" strokeWidth="1.6" />
            <path d="m13 3 3 4h-6zM13 23l3-4h-6zM3 13l4-3v6zM23 13l-4-3v6z" fill="#ffffff" stroke="none" />
          </svg>
        </button>
      </div>
    </footer>
  );
}

export default function App() {
  return (
    <div className="relative flex min-h-screen flex-col bg-[#282828] font-['Noto_Sans_CJK_KR',sans-serif]">
      <TitleBar />
      <Ribbon />
      <div className="flex flex-1">
        <div className="w-[9px] shrink-0 border-r-2 border-black bg-[#323232]" />
        <main className="flex min-w-0 flex-1 flex-col">
          <div className="flex-1 border-b-2 border-black pt-[118px] pr-[52px] pl-[53px]">
            <SlideChart />
          </div>
          <div className="h-[7px] bg-[#323232]" />
        </main>
        <FormatPane />
      </div>
      <StatusBar />

      <div className="absolute right-6 bottom-[170px] rounded-lg bg-black p-2 shadow-[0_0_30px_rgba(0,0,0,0.3)]">
        <WindowPreview />
      </div>
    </div>
  );
}
